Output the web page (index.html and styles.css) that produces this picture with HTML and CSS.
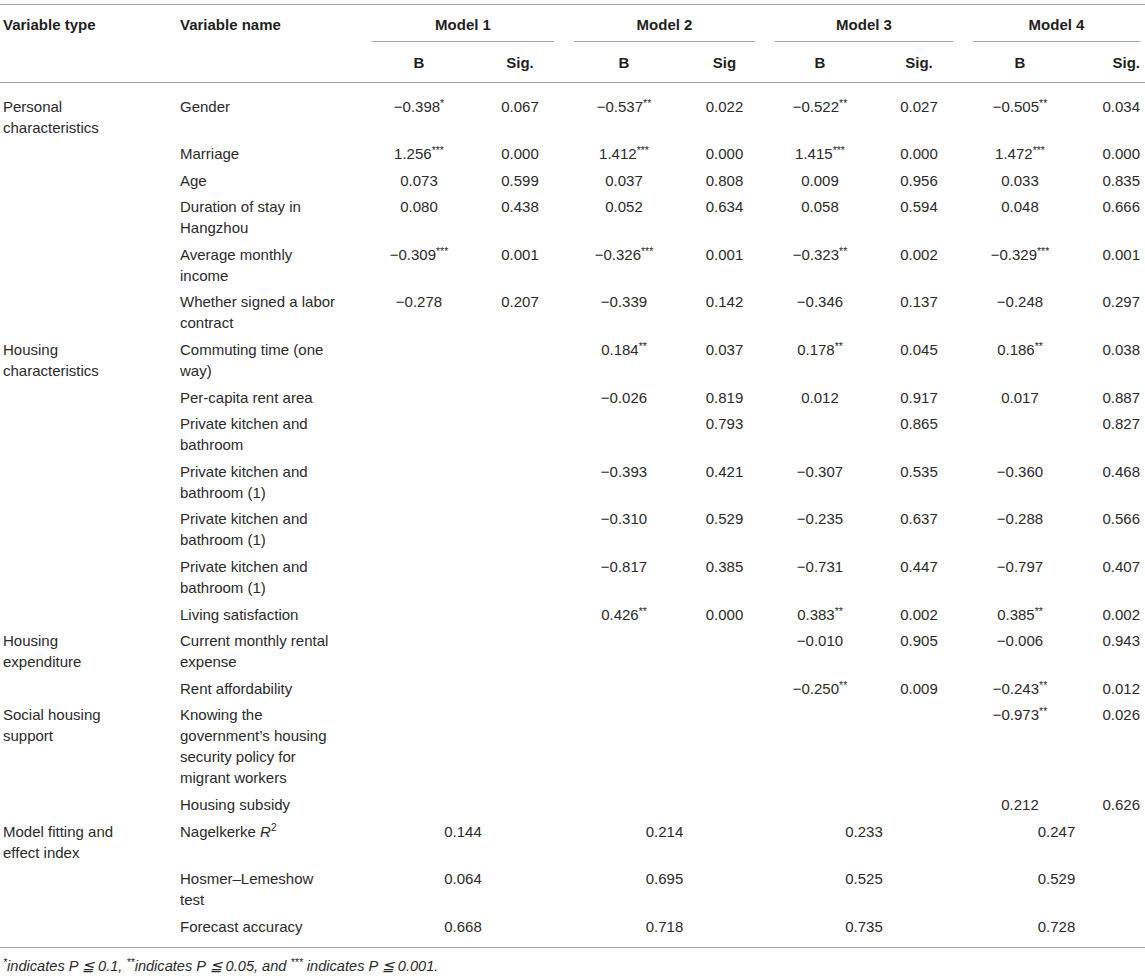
FILE: index.html
```html
<!DOCTYPE html>
<html lang="en">
<head>
<meta charset="utf-8">
<title>Logistic regression models</title>
<link rel="stylesheet" href="styles.css">
</head>
<body>
<div class="table-wrap">
<table class="data">
  <colgroup>
    <col class="w-type"><col class="w-name">
    <col class="w-b1"><col class="w-s1">
    <col class="w-b2"><col class="w-s2">
    <col class="w-b3"><col class="w-s3">
    <col class="w-b4"><col class="w-s4">
  </colgroup>
  <thead>
    <tr>
      <th class="hv type" rowspan="2">Variable type</th>
      <th class="hv name" rowspan="2">Variable name</th>
      <th class="model" colspan="2"><div class="mh">Model 1</div></th>
      <th class="model" colspan="2"><div class="mh">Model 2</div></th>
      <th class="model" colspan="2"><div class="mh">Model 3</div></th>
      <th class="model m4" colspan="2"><div class="mh">Model 4</div></th>
    </tr>
    <tr>
      <th class="sub">B</th><th class="sub">Sig.</th>
      <th class="sub">B</th><th class="sub">Sig</th>
      <th class="sub">B</th><th class="sub">Sig.</th>
      <th class="sub">B</th><th class="sub last">Sig.</th>
    </tr>
  </thead>
  <tbody>
    <tr class="first">
      <td class="type">Personal characteristics</td><td class="name">Gender</td>
      <td>−0.398<sup class="st">*</sup></td><td>0.067</td>
      <td>−0.537<sup class="st">**</sup></td><td>0.022</td>
      <td>−0.522<sup class="st">**</sup></td><td>0.027</td>
      <td>−0.505<sup class="st">**</sup></td><td class="last">0.034</td>
    </tr>
    <tr>
      <td class="type"></td><td class="name">Marriage</td>
      <td>1.256<sup class="st">***</sup></td><td>0.000</td>
      <td>1.412<sup class="st">***</sup></td><td>0.000</td>
      <td>1.415<sup class="st">***</sup></td><td>0.000</td>
      <td>1.472<sup class="st">***</sup></td><td class="last">0.000</td>
    </tr>
    <tr>
      <td class="type"></td><td class="name">Age</td>
      <td>0.073</td><td>0.599</td>
      <td>0.037</td><td>0.808</td>
      <td>0.009</td><td>0.956</td>
      <td>0.033</td><td class="last">0.835</td>
    </tr>
    <tr>
      <td class="type"></td><td class="name">Duration of stay in Hangzhou</td>
      <td>0.080</td><td>0.438</td>
      <td>0.052</td><td>0.634</td>
      <td>0.058</td><td>0.594</td>
      <td>0.048</td><td class="last">0.666</td>
    </tr>
    <tr>
      <td class="type"></td><td class="name">Average monthly income</td>
      <td>−0.309<sup class="st">***</sup></td><td>0.001</td>
      <td>−0.326<sup class="st">***</sup></td><td>0.001</td>
      <td>−0.323<sup class="st">**</sup></td><td>0.002</td>
      <td>−0.329<sup class="st">***</sup></td><td class="last">0.001</td>
    </tr>
    <tr>
      <td class="type"></td><td class="name">Whether signed a labor contract</td>
      <td>−0.278</td><td>0.207</td>
      <td>−0.339</td><td>0.142</td>
      <td>−0.346</td><td>0.137</td>
      <td>−0.248</td><td class="last">0.297</td>
    </tr>
    <tr>
      <td class="type">Housing characteristics</td><td class="name">Commuting time (one way)</td>
      <td></td><td></td>
      <td>0.184<sup class="st">**</sup></td><td>0.037</td>
      <td>0.178<sup class="st">**</sup></td><td>0.045</td>
      <td>0.186<sup class="st">**</sup></td><td class="last">0.038</td>
    </tr>
    <tr>
      <td class="type"></td><td class="name">Per-capita rent area</td>
      <td></td><td></td>
      <td>−0.026</td><td>0.819</td>
      <td>0.012</td><td>0.917</td>
      <td>0.017</td><td class="last">0.887</td>
    </tr>
    <tr>
      <td class="type"></td><td class="name">Private kitchen and bathroom</td>
      <td></td><td></td>
      <td></td><td>0.793</td>
      <td></td><td>0.865</td>
      <td></td><td class="last">0.827</td>
    </tr>
    <tr>
      <td class="type"></td><td class="name">Private kitchen and bathroom (1)</td>
      <td></td><td></td>
      <td>−0.393</td><td>0.421</td>
      <td>−0.307</td><td>0.535</td>
      <td>−0.360</td><td class="last">0.468</td>
    </tr>
    <tr>
      <td class="type"></td><td class="name">Private kitchen and bathroom (1)</td>
      <td></td><td></td>
      <td>−0.310</td><td>0.529</td>
      <td>−0.235</td><td>0.637</td>
      <td>−0.288</td><td class="last">0.566</td>
    </tr>
    <tr>
      <td class="type"></td><td class="name">Private kitchen and bathroom (1)</td>
      <td></td><td></td>
      <td>−0.817</td><td>0.385</td>
      <td>−0.731</td><td>0.447</td>
      <td>−0.797</td><td class="last">0.407</td>
    </tr>
    <tr>
      <td class="type"></td><td class="name">Living satisfaction</td>
      <td></td><td></td>
      <td>0.426<sup class="st">**</sup></td><td>0.000</td>
      <td>0.383<sup class="st">**</sup></td><td>0.002</td>
      <td>0.385<sup class="st">**</sup></td><td class="last">0.002</td>
    </tr>
    <tr>
      <td class="type">Housing expenditure</td><td class="name">Current monthly rental expense</td>
      <td></td><td></td>
      <td></td><td></td>
      <td>−0.010</td><td>0.905</td>
      <td>−0.006</td><td class="last">0.943</td>
    </tr>
    <tr>
      <td class="type"></td><td class="name">Rent affordability</td>
      <td></td><td></td>
      <td></td><td></td>
      <td>−0.250<sup class="st">**</sup></td><td>0.009</td>
      <td>−0.243<sup class="st">**</sup></td><td class="last">0.012</td>
    </tr>
    <tr>
      <td class="type">Social housing support</td><td class="name">Knowing the government’s housing security policy for migrant workers</td>
      <td></td><td></td>
      <td></td><td></td>
      <td></td><td></td>
      <td>−0.973<sup class="st">**</sup></td><td class="last">0.026</td>
    </tr>
    <tr>
      <td class="type"></td><td class="name">Housing subsidy</td>
      <td></td><td></td>
      <td></td><td></td>
      <td></td><td></td>
      <td>0.212</td><td class="last">0.626</td>
    </tr>
    <tr>
      <td class="type">Model fitting and effect index</td><td class="name">Nagelkerke <i>R</i><sup class="pw">2</sup></td>
      <td colspan="2">0.144</td>
      <td colspan="2">0.214</td>
      <td colspan="2">0.233</td>
      <td colspan="2" class="span4">0.247</td>
    </tr>
    <tr>
      <td class="type"></td><td class="name">Hosmer–Lemeshow test</td>
      <td colspan="2">0.064</td>
      <td colspan="2">0.695</td>
      <td colspan="2">0.525</td>
      <td colspan="2" class="span4">0.529</td>
    </tr>
    <tr class="final">
      <td class="type"></td><td class="name">Forecast accuracy</td>
      <td colspan="2">0.668</td>
      <td colspan="2">0.718</td>
      <td colspan="2">0.735</td>
      <td colspan="2" class="span4">0.728</td>
    </tr>
  </tbody>
</table>
<p class="note"><sup class="st">*</sup>indicates P ≦ 0.1, <sup class="st">**</sup>indicates P ≦ 0.05, and <sup class="st">***</sup> indicates P ≦ 0.001.</p>
</div>
</body>
</html>
```

FILE: styles.css
```css
html, body {
  margin: 0;
  padding: 0;
  background: #ffffff;
}

body {
  font-family: "Liberation Sans", Arial, Helvetica, sans-serif;
  font-size: 15px;
  color: #2a2a2a;
}

.table-wrap {
  padding-top: 4px;
  width: 1145px;
}

.data {
  border-collapse: collapse;
  table-layout: fixed;
  width: 1145px;
  border-top: 1px solid #a3a3a3;
  border-bottom: 1px solid #a3a3a3;
}

.w-type { width: 177px; }
.w-name { width: 185px; }
.w-b1 { width: 114px; }
.w-s1 { width: 88px; }
.w-b2 { width: 120px; }
.w-s2 { width: 81px; }
.w-b3 { width: 110px; }
.w-s3 { width: 88px; }
.w-b4 { width: 114px; }
.w-s4 { width: 68px; }

.data thead {
  border-bottom: 1px solid #a3a3a3;
}

.data th {
  font-weight: bold;
  color: #1f1f1f;
  line-height: 21px;
  vertical-align: top;
  padding: 0;
}

.data th.hv {
  text-align: left;
  padding: 9px 0 0 3px;
}

.data th.model {
  text-align: center;
  padding: 9px 10px 0 10px;
}

.data th.model.m4 {
  padding-right: 5px;
}

.mh {
  padding-bottom: 6px;
  border-bottom: 1px solid #a3a3a3;
}

.data th.sub {
  text-align: center;
  padding: 9.5px 0 9.5px 0;
}

.data th.sub.last {
  text-align: right;
  padding-right: 5px;
}

.data td {
  line-height: 21px;
  vertical-align: top;
  text-align: center;
  padding: 3px 0 2.6px 0;
}

.data td.type {
  text-align: left;
  padding-left: 3px;
  padding-right: 49px;
}

.data td.name {
  text-align: left;
  padding-left: 3px;
  padding-right: 24px;
}

.data td.last {
  text-align: right;
  padding-right: 5px;
}

.data td.span4 {
  padding-left: 10px;
  padding-right: 5px;
}

.data tr.first td {
  padding-top: 12.5px;
}

.data tr.final td {
  padding-bottom: 10px;
}

.st {
  font-size: 10.5px;
  line-height: 0;
  vertical-align: 0.5em;
}

.pw {
  font-size: 10px;
  line-height: 0;
  vertical-align: 0.6em;
}

.note {
  margin: 0;
  padding: 8px 0 0 3px;
  font-size: 14.6px;
  line-height: 21px;
  font-style: italic;
  color: #2a2a2a;
}
```
